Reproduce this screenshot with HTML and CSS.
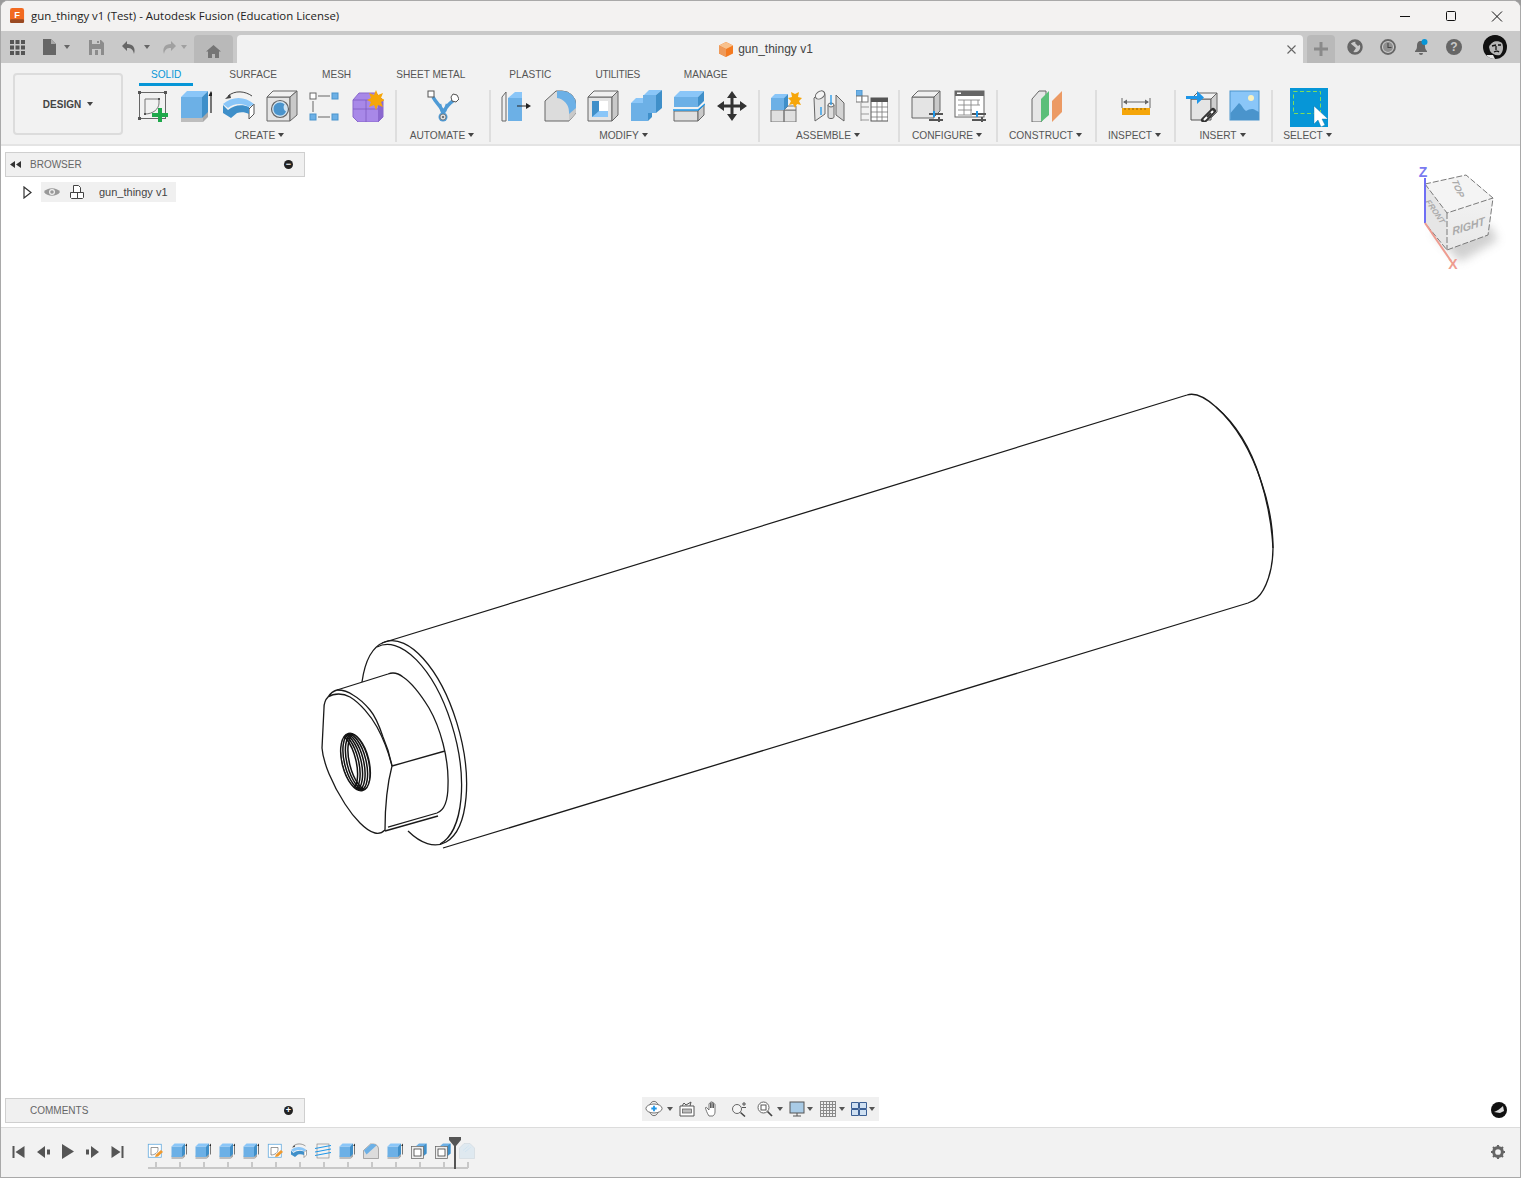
FILE: index.html
```html
<!DOCTYPE html>
<html>
<head>
  <meta charset="UTF-8">
  <title>gun_thingy v1 (Test) - Autodesk Fusion</title>
  <link rel="stylesheet" href="styles.css">
</head>
<body>
  <!-- icon sheet -->
  <svg class="sprites" xmlns="http://www.w3.org/2000/svg">
    <symbol id="i-sketch" viewBox="0 0 32 32">
      <rect x="2.5" y="2.5" width="26" height="26" fill="none" stroke="#666" stroke-width="1"/>
      <path d="M8 9H22V13C22 19 16 24 8 24Z" fill="none" stroke="#777" stroke-width="1"/>
      <g fill="#555"><rect x="1" y="1" width="3" height="3"/><rect x="27" y="1" width="3" height="3"/><rect x="1" y="27" width="3" height="3"/><rect x="7" y="23" width="2" height="2"/><rect x="21" y="8" width="2" height="2"/></g>
      <path d="M21 18h4v5h6v4h-6v5h-4v-5h-6v-4h6z" fill="#1fa84b"/>
    </symbol>
    <symbol id="i-sketch-edit" viewBox="0 0 32 32">
      <rect x="2.5" y="2.5" width="26" height="26" fill="#fff" stroke="#5aa5dc" stroke-width="1.5"/>
      <path d="M8 9H22V13C22 19 16 24 8 24Z" fill="none" stroke="#777" stroke-width="1.5"/>
      <path d="M16 28l2-5 10-9 4 4-10 9z" fill="#f09a2e"/>
    </symbol>
    <symbol id="i-extrude" viewBox="0 0 32 32">
      <path d="M1 25h22v7H1z" fill="#bdbdbd"/><path d="M23 25l5-5v7l-5 5z" fill="#a8a8a8"/>
      <path d="M1 7h21v21H1z" fill="#6cb0e6"/><path d="M1 7l6-6h21l-6 6z" fill="#8ac6f8"/><path d="M22 7l6-6v21l-6 6z" fill="#3f8fc9"/>
      <path d="M31 23V5" stroke="#222" stroke-width="1.2"/><path d="M31 1l-2.5 5h5z" fill="#222"/>
    </symbol>
    <symbol id="i-revolve" viewBox="0 0 32 32">
      <path d="M5 6C12 0 22 1 29 6" fill="none" stroke="#444" stroke-width="1"/><path d="M2 9l5-5 1 4z" fill="#444"/>
      <path d="M26 19l5-5v10l-5 5z" fill="#fff" stroke="#555"/>
      <path d="M0 15v8l8 5 6-5c4-1 8-1 12 1v-7C19 14 11 15 5 20z" fill="#3f8fc9"/>
      <path d="M0 14l5 4C11 13 20 13 26 17l5-3C22 6 9 6 0 14z" fill="#8ac6f8"/>
    </symbol>
    <symbol id="i-hole" viewBox="0 0 32 32">
      <path d="M1 7h23v24H1z" fill="#e4e4e4" stroke="#666"/><path d="M1 7l6-6h24l-7 6z" fill="#f0f0f0" stroke="#666"/><path d="M24 7l7-6v24l-7 6z" fill="#c9c9c9" stroke="#666"/>
      <circle cx="14" cy="19" r="8.5" fill="#cfe3f2" stroke="#666" stroke-width="1.2"/>
      <path d="M7.5 19a6.5 6.5 0 0 1 11-4.7a5 5 0 0 0 1.5 7.2a6.5 6.5 0 0 1-12.5-2.5z" fill="#4a94cc"/>
    </symbol>
    <symbol id="i-pattern" viewBox="0 0 32 32">
      <rect x="1" y="3" width="6" height="6" fill="#fff" stroke="#666"/><rect x="23" y="3" width="6" height="6" fill="#6cb0e6" stroke="#4a94cc"/>
      <rect x="1" y="24" width="6" height="6" fill="#6cb0e6" stroke="#4a94cc"/><rect x="23" y="24" width="6" height="6" fill="#6cb0e6" stroke="#4a94cc"/>
      <path d="M9 6H21M4 11V22M9 27H21" stroke="#666" stroke-width="1"/>
    </symbol>
    <symbol id="i-newbody" viewBox="0 0 32 32">
      <path d="M1 10L7 3H24L31 10V27L26 32H6L1 27Z" fill="#a888e8" stroke="#8a68cc"/>
      <path d="M1 19H28M14 10V32M1 10H26" stroke="#7d5cc0" stroke-width=".8"/><path d="M26 10l5 0v17l-5 5z" fill="#8b68cf"/>
      <path d="M24 0l2 5 5-2-2 5 4 2-4 2 2 5-5-2-2 5-2-5-5 2 2-5-4-2 4-2-2-5 5 2z" fill="#f6a609"/>
    </symbol>
    <symbol id="i-automate" viewBox="0 0 32 32">
      <path d="M6 7C9 13 13 15 15 20L18 20C20 15 23 13 27 10" fill="none" stroke="#4f9bd6" stroke-width="3.5"/>
      <path d="M13 14L16 26 20 14" fill="none" stroke="#4f9bd6" stroke-width="2.5"/>
      <rect x="1" y="1" width="6" height="6" fill="#fff" stroke="#555"/><path d="M26 4l4 1 2 4-3 3-4-1-1-4z" fill="#fff" stroke="#555"/>
      <circle cx="16" cy="27" r="4.5" fill="#4f9bd6"/><circle cx="16" cy="27" r="3" fill="#ddd" stroke="#666" stroke-width=".7"/><circle cx="16" cy="27" r="1" fill="#555"/>
    </symbol>
    <symbol id="i-press" viewBox="0 0 32 32">
      <path d="M1 7L5 2V31H1z" fill="#eee" stroke="#666"/><path d="M7 8h14v23H7z" fill="#6cb0e6"/><path d="M7 8l7-6h7v6z" fill="#8ac6f8"/>
      <path d="M16 16h12" stroke="#222" stroke-width="1.2"/><path d="M30 16l-5-3v6z" fill="#222"/>
    </symbol>
    <symbol id="i-fillet" viewBox="0 0 32 32">
      <path d="M1 11L12 1h6a14 14 0 0 1 14 14v8l-7 8H1z" fill="#dcdcdc" stroke="#666"/>
      <path d="M13 1h5a14 14 0 0 1 14 14v4l-7 7V22A14 14 0 0 0 13 8z" fill="#6cb0e6"/>
      <path d="M25 24v7l7-8v-5z" fill="#c9c9c9"/>
    </symbol>
    <symbol id="i-shell" viewBox="0 0 32 32">
      <path d="M1 7h24v24H1z" fill="#e4e4e4" stroke="#666"/><path d="M1 7l6-6h24l-6 6z" fill="#f0f0f0" stroke="#666"/><path d="M25 7l6-6v24l-6 6z" fill="#c9c9c9" stroke="#666"/>
      <rect x="5" y="11" width="16" height="16" fill="#fff"/><path d="M5 11h7v10h9v6H5z" fill="#3f8fc9"/><path d="M5 27l7-6h9v6z" fill="#8ac6f8"/>
    </symbol>
    <symbol id="i-combine" viewBox="0 0 32 32">
      <path d="M1 13h12V31H1z" fill="#6cb0e6"/><path d="M1 13l5-5h8l-1 5z" fill="#8ac6f8"/><path d="M14 5l5-5h13l-6 5z" fill="#8ac6f8"/><path d="M13 5h13v18h-8v8l-5 0z" fill="#6cb0e6"/><path d="M26 5l6-5v18l-6 5z" fill="#3f8fc9"/><path d="M18 23l4 0v4l-4 4z" fill="#3f8fc9"/>
    </symbol>
    <symbol id="i-split" viewBox="0 0 32 32">
      <path d="M1 21h24v10H1z" fill="#e0e0e0" stroke="#666"/><path d="M25 21l6-6v10l-6 6z" fill="#c9c9c9" stroke="#666"/>
      <path d="M1 7h24v10H1z" fill="#6cb0e6"/><path d="M1 7l6-6h24l-6 6z" fill="#8ac6f8"/><path d="M25 7l6-6v10l-6 6z" fill="#3f8fc9"/>
      <path d="M0 20H25L32 14" fill="none" stroke="#1e96e8" stroke-width="1.3"/>
    </symbol>
    <symbol id="i-move" viewBox="0 0 32 32">
      <path d="M16 1l5 7h-3.5v6.500H24V11l7 5-7 5v-3.5h-6.500V24H21l-5 7-5-7h3.5v-6.500H8V21l-7-5 7-5v3.5h6.500V8H11z" fill="#333"/>
    </symbol>
    <symbol id="i-newcomp" viewBox="0 0 32 32">
      <path d="M1 20h13v12H1zM14 20h12v12H14z" fill="#e0e0e0" stroke="#777"/><path d="M14 20l4-4h8v4z" fill="#f0f0f0" stroke="#777"/>
      <path d="M1 8h13v12H1z" fill="#6cb0e6"/><path d="M1 8l4-4h13l-4 4z" fill="#8ac6f8"/><path d="M14 8l4-4v12l-4 4z" fill="#3f8fc9"/>
      <path d="M23 0l2 4 4-2-1 5 4 1-3 3 2 4-4-1-2 4-2-4-4 1 2-4-3-3 4-1-1-5 4 2z" fill="#f6a609"/>
    </symbol>
    <symbol id="i-joint" viewBox="0 0 32 32">
      <path d="M1 8L8 1C11 1 12 3 12 5V24L2 31Z" fill="#e6e6e6" stroke="#666"/><ellipse cx="7" cy="5" rx="5" ry="3.5" transform="rotate(-35 7 5)" fill="#f4f4f4" stroke="#666"/>
      <path d="M23 5L31 13V31L23 25Z" fill="#d4d4d4" stroke="#666"/><path d="M15 15v12c0 2 6 2 6 0V15z" fill="#ddd" stroke="#666"/><ellipse cx="18" cy="15" rx="3" ry="2" fill="#eee" stroke="#666"/>
      <path d="M18 5v10M8 17v8" stroke="#1e96e8" stroke-width="1.3"/>
    </symbol>
    <symbol id="i-bom" viewBox="0 0 32 32">
      <rect x="0" y="0" width="6" height="6" fill="#6cb0e6" stroke="#4a94cc"/><rect x="0" y="6" width="6" height="6" fill="#fff" stroke="#777"/><rect x="6" y="6" width="6" height="6" fill="#fff" stroke="#777"/>
      <path d="M5 13V31M5 17H13M5 24H13M5 30H13" stroke="#999" stroke-width="1"/>
      <rect x="15" y="8" width="17" height="23" fill="#fff" stroke="#555"/><path d="M15 8h17v4H15z" fill="#555"/><path d="M15 17H32M15 22H32M15 27H32M21 12V31M26 12V31" stroke="#777" stroke-width=".8"/>
    </symbol>
    <symbol id="i-config" viewBox="0 0 32 32">
      <path d="M1 7h22v21H1z" fill="#e4e4e4" stroke="#666"/><path d="M1 7l6-6h22l-6 6z" fill="#f0f0f0" stroke="#666"/><path d="M23 7l6-6v20l-6 6z" fill="#c9c9c9" stroke="#666"/>
      <path d="M18 24H32M18 30H32" stroke="#555" stroke-width="1.8"/><path d="M23 21v6" stroke="#1e96e8" stroke-width="2"/><path d="M28 27v5" stroke="#555" stroke-width="2"/>
    </symbol>
    <symbol id="i-table" viewBox="0 0 32 32">
      <rect x="1" y="1" width="29" height="26" fill="#fff" stroke="#666"/><path d="M1 1h29v5H1z" fill="#666"/><rect x="3" y="2.5" width="4" height="1.5" fill="#fff"/>
      <path d="M4 10H26M4 15H26M4 20H18M4 25H18M10 10V25M17 10V25M24 10V15" stroke="#888" stroke-width=".9"/>
      <path d="M18 24H32M18 30H32" stroke="#555" stroke-width="1.8"/><path d="M23 21v6" stroke="#1e96e8" stroke-width="2"/><path d="M28 27v5" stroke="#555" stroke-width="2"/>
    </symbol>
    <symbol id="i-construct" viewBox="0 0 32 32">
      <path d="M1 9L8 1h7v23l-5 8H1z" fill="#e6e6e6" stroke="#666"/>
      <path d="M10 9L18 1v24l-8 7z" fill="#5bbf79"/><path d="M21 11L31 1v21l-10 10z" fill="#ec9a64"/>
    </symbol>
    <symbol id="i-measure" viewBox="0 0 32 32">
      <path d="M2 8v10M30 8v10M4 12H28" stroke="#666" stroke-width="1"/><path d="M3 12l4-2.5v5zM29 12l-4-2.5v5z" fill="#666"/>
      <rect x="2" y="18" width="28" height="7" fill="#f5a60a"/><path d="M5 18v2M9 18v2M13 18v2M17 18v2M21 18v2M25 18v2" stroke="#7a5000" stroke-width=".8"/>
    </symbol>
    <symbol id="i-insert" viewBox="0 0 32 32">
      <path d="M5 9h20v21H5z" fill="#e4e4e4" stroke="#555"/><path d="M5 9l6-6h20l-6 6z" fill="#f2f2f2" stroke="#666"/><path d="M25 9l6-6v19l-6 6z" fill="#cfcfcf" stroke="#666"/>
      <path d="M0 6h11V1l7 6.5-7 6.5V9H0z" fill="#1e96e8"/>
      <path d="M18 30l9-9" stroke="#333" stroke-width="6" stroke-linecap="round"/><path d="M18.5 29.5l8-8" stroke="#fff" stroke-width="2" stroke-linecap="round"/><path d="M21 27l4-4" stroke="#333" stroke-width="2"/>
    </symbol>
    <symbol id="i-image" viewBox="0 0 32 32">
      <rect x="1" y="1" width="29" height="29" fill="#8ac6f8" stroke="#4a94cc"/><circle cx="22" cy="8" r="3" fill="#f9f1c0"/>
      <path d="M1.5 23L10 13c3 2 4 6 7 8 3-2 7-3 9-1l4 2v8H1.5z" fill="#4a94cc"/>
    </symbol>
    <symbol id="i-select" viewBox="0 0 38 39">
      <rect width="38" height="39" fill="#0696d7"/>
      <rect x="3.5" y="3.5" width="27" height="22" fill="none" stroke="#7fdc5a" stroke-width="1" stroke-dasharray="4 2.5"/>
      <path d="M24 18v18l4-4 3 7 4-2-3-6h6z" fill="#fff" stroke="#0a6fa0" stroke-width=".4"/>
    </symbol>
    <symbol id="i-fillet-small" viewBox="0 0 32 32">
      <path d="M1 15L15 2h6A10 10 0 0 1 31 12V31H1z" fill="#dcdcdc" stroke="#666"/>
      <path d="M2 15L16 2h4c2 0 5 1 7 3L7 23z" fill="#6cb0e6"/>
    </symbol>
    <symbol id="i-coil" viewBox="0 0 32 32">
      <rect x="4" y="2" width="24" height="28" fill="none" stroke="#666" stroke-width="1"/>
      <path d="M0 11L32 5M0 18L32 12M0 25L32 19" stroke="#1e96e8" stroke-width="2.2"/>
    </symbol>
    <symbol id="i-shell-small" viewBox="0 0 32 32">
      <path d="M10 6l6-5h15v20l-6 5H18V6z" fill="#6cb0e6"/><path d="M25 6l6-5v20l-6 5z" fill="#3f8fc9"/>
      <rect x="1" y="7" width="24" height="24" fill="#eee" stroke="#666" stroke-width="1.5"/><rect x="6" y="12" width="14" height="14" fill="#fff" stroke="#333" stroke-width="1.5"/>
    </symbol>
    <symbol id="i-faded" viewBox="0 0 32 32">
      <path d="M1 10L10 1h12l9 9v21H1z" fill="#dfe9f0" stroke="#c9d2d8"/><path d="M8 15L20 5M12 18L24 8" stroke="#a9d2ef" stroke-width="1" stroke-dasharray="1.5 1.5"/>
    </symbol>
  </svg>

  <div class="window">
    <div class="titlebar">
      <svg class="app-icon" viewBox="0 0 16 17">
        <rect width="15" height="16" rx="2.5" fill="#f26a21"/><rect y="12" width="15" height="4" rx="1.5" fill="#9a4a22"/>
        <text x="7.5" y="10.5" text-anchor="middle" class="app-icon-letter">F</text>
      </svg>
      <span class="app-title">gun_thingy v1 (Test) - Autodesk Fusion (Education License)</span>
      <div class="win-buttons">
        <svg viewBox="0 0 46 30"><path d="M18 15.5H28" stroke="#111"/></svg>
        <svg viewBox="0 0 46 30"><rect x="18.5" y="10.5" width="9" height="9" rx="1" fill="none" stroke="#111"/></svg>
        <svg viewBox="0 0 46 30"><path d="M18 10.5L28 20.5M28 10.5L18 20.5" stroke="#111"/></svg>
      </div>
    </div>

    <div class="tabbar">
      <div class="qat">
        <svg class="qat-grid" viewBox="0 0 15 15"><path d="M0 0h4v4H0zM5.5 0h4v4h-4zM11 0h4v4h-4zM0 5.5h4v4H0zM5.5 5.5h4v4h-4zM11 5.5h4v4h-4zM0 11h4v4H0zM5.5 11h4v4h-4zM11 11h4v4h-4z" fill="#555"/></svg>
        <svg class="qat-file" viewBox="0 0 13 16"><path d="M0 0h8l5 5v11H0z" fill="#666"/><path d="M8 0l5 5H8z" fill="#a9a9a9"/></svg>
        <span class="caret qat-caret"></span>
        <svg class="qat-save" viewBox="0 0 15 15"><path d="M0 0h12l3 3v12H0z" fill="#8c8c8c"/><path d="M3 0h8v4H3zM3 9h9v6H3z" fill="#c9c9c9"/><path d="M8 1h2v2H8zM6 10h3v5H6z" fill="#8c8c8c"/></svg>
        <svg class="qat-undo" viewBox="0 0 14 13"><path d="M5 0L0 5l5 5V7c4 0 6 1 7 6 2-6-1-10-7-10z" fill="#666"/></svg>
        <span class="caret qat-caret"></span>
        <svg class="qat-redo" viewBox="0 0 14 13"><path d="M9 0l5 5-5 5V7C5 7 3 8 2 13 0 7 3 3 9 3z" fill="#a0a0a0"/></svg>
        <span class="caret qat-caret qat-caret-off"></span>
      </div>
      <div class="home-tab">
        <svg viewBox="0 0 15 13"><path d="M7.5 0L15 6.5h-2V13H9V9H6v4H2V6.5H0z" fill="#757575"/></svg>
      </div>
      <div class="doc-tab">
        <svg class="doc-icon" viewBox="0 0 14 15"><path d="M7 0l7 3.5v8L7 15 0 11.5v-8z" fill="#f47a20"/><path d="M7 0l7 3.5L7 7 0 3.5z" fill="#f8c18d"/><path d="M0 3.5L7 7v8L0 11.5z" fill="#ee9a5a"/></svg>
        <span class="doc-title">gun_thingy v1</span>
        <svg class="doc-close" viewBox="0 0 9 9"><path d="M.5.5l8 8M8.5.5l-8 8" stroke="#666" stroke-width="1.1"/></svg>
      </div>
      <div class="plus-tab">
        <svg viewBox="0 0 14 14"><path d="M5.5 0h3v5.5H14v3H8.5V14h-3V8.5H0v-3h5.5z" fill="#8a8a8a"/></svg>
      </div>
      <div class="status-icons">
        <svg viewBox="0 0 16 16"><circle cx="8" cy="8" r="6.5" fill="none" stroke="#666" stroke-width="2.5"/><path d="M3 4l6 5-4 6-3-4zM10 1l4 4-3 2-3-3z" fill="#666"/></svg>
        <svg viewBox="0 0 16 16"><circle cx="8" cy="8" r="7" fill="none" stroke="#666" stroke-width="1.8"/><circle cx="8" cy="8" r="5" fill="#8f8f8f"/><path d="M8 4v4.5h3.5" fill="none" stroke="#444" stroke-width="1.1"/></svg>
        <svg viewBox="0 0 16 16"><path d="M8 2C5 2 4 4 4 7c0 3-1 4-2 5v1h12v-1c-1-1-2-2-2-5 0-3-1-5-4-5zM6 14a2 2 0 0 0 4 0z" fill="#666"/><circle cx="11.5" cy="3" r="3" fill="#0696d7"/></svg>
        <svg viewBox="0 0 16 16"><circle cx="8" cy="8" r="8" fill="#666"/><text x="8" y="12.3" text-anchor="middle" class="help-mark">?</text></svg>
      </div>
      <svg class="avatar" viewBox="0 0 24 24">
        <defs><clipPath id="avatar-clip"><circle cx="12" cy="12" r="12"/></clipPath></defs>
        <g clip-path="url(#avatar-clip)">
          <rect width="24" height="24" fill="#111"/>
          <path d="M6 12C8 6 15 5 19 8c2 4 1 9-2 12-4 1-8-1-10-4z" fill="#b5b5b5"/>
          <path d="M9 11l4-1M15 10l3 0M13 11v4M11 17c2-1 4-1 5 0" stroke="#111" stroke-width="1.3" fill="none"/>
          <path d="M4 20l6 0 2 4H2z" fill="#e5e5e5"/><path d="M5 3C10-1 19 0 22 6 16 3 10 5 7 10z" fill="#111"/>
        </g>
      </svg>
    </div>

    <div class="toolbar">
      <div class="workspace">
        <span>DESIGN</span><span class="caret"></span>
      </div>
      <div class="ribbon">
        <div class="tabs">
          <span class="tab tab-active">SOLID</span>
          <span class="tab">SURFACE</span>
          <span class="tab">MESH</span>
          <span class="tab">SHEET METAL</span>
          <span class="tab">PLASTIC</span>
          <span class="tab">UTILITIES</span>
          <span class="tab">MANAGE</span>
        </div>
        <div class="groups">
          <div class="group g-create">
            <div class="tools">
              <svg class="tool"><use href="#i-sketch"/></svg>
              <svg class="tool"><use href="#i-extrude"/></svg>
              <svg class="tool"><use href="#i-revolve"/></svg>
              <svg class="tool"><use href="#i-hole"/></svg>
              <svg class="tool"><use href="#i-pattern"/></svg>
              <svg class="tool"><use href="#i-newbody"/></svg>
            </div>
            <div class="group-label">CREATE<span class="caret"></span></div>
          </div>
          <div class="group g-automate">
            <div class="tools"><svg class="tool"><use href="#i-automate"/></svg></div>
            <div class="group-label">AUTOMATE<span class="caret"></span></div>
          </div>
          <div class="group g-modify">
            <div class="tools">
              <svg class="tool"><use href="#i-press"/></svg>
              <svg class="tool"><use href="#i-fillet"/></svg>
              <svg class="tool"><use href="#i-shell"/></svg>
              <svg class="tool"><use href="#i-combine"/></svg>
              <svg class="tool"><use href="#i-split"/></svg>
              <svg class="tool"><use href="#i-move"/></svg>
            </div>
            <div class="group-label">MODIFY<span class="caret"></span></div>
          </div>
          <div class="group g-assemble">
            <div class="tools">
              <svg class="tool"><use href="#i-newcomp"/></svg>
              <svg class="tool"><use href="#i-joint"/></svg>
              <svg class="tool"><use href="#i-bom"/></svg>
            </div>
            <div class="group-label">ASSEMBLE<span class="caret"></span></div>
          </div>
          <div class="group g-configure">
            <div class="tools">
              <svg class="tool"><use href="#i-config"/></svg>
              <svg class="tool"><use href="#i-table"/></svg>
            </div>
            <div class="group-label">CONFIGURE<span class="caret"></span></div>
          </div>
          <div class="group g-construct">
            <div class="tools"><svg class="tool"><use href="#i-construct"/></svg></div>
            <div class="group-label">CONSTRUCT<span class="caret"></span></div>
          </div>
          <div class="group g-inspect">
            <div class="tools"><svg class="tool"><use href="#i-measure"/></svg></div>
            <div class="group-label">INSPECT<span class="caret"></span></div>
          </div>
          <div class="group g-insert">
            <div class="tools">
              <svg class="tool"><use href="#i-insert"/></svg>
              <svg class="tool"><use href="#i-image"/></svg>
            </div>
            <div class="group-label">INSERT<span class="caret"></span></div>
          </div>
          <div class="group g-select">
            <div class="tools"><svg class="tool-select"><use href="#i-select"/></svg></div>
            <div class="group-label">SELECT<span class="caret"></span></div>
          </div>
        </div>
      </div>
    </div>

    <div class="viewport">
      <svg class="model" viewBox="0 146 1521 981">
        <defs>
          <clipPath id="bore"><ellipse cx="355.5" cy="762" rx="13.5" ry="29.5" transform="rotate(-14 355.5 762)"/></clipPath>
          <filter id="cube-shadow" x="-50%" y="-50%" width="200%" height="200%"><feGaussianBlur stdDeviation="5"/></filter>
          <linearGradient id="cube-face" x1="0" y1="0" x2="0" y2="1"><stop offset="0" stop-color="#f2f2f2"/><stop offset="1" stop-color="#e8e8e8"/></linearGradient>
        </defs>
        <g class="edges">
          <!-- body -->
          <path d="M382 643L1187 395C1196 392 1206 398 1216 407C1236 425 1252 453 1262 484C1269 505 1273 528 1273 548C1273 570 1266 590 1257 598C1254 601 1251 602 1248 603L443 848"/>
          <path d="M1216 407C1236 424 1251 449 1260 478C1267 500 1272 528 1273 548"/>
          <!-- flange -->
          <path d="M362 682A47 105 -15 1 1 408 831"/>
          <path d="M377 647A47 103 -15 0 1 440 844"/>
          <!-- nut -->
          <path d="M337 690L388 674C393 672 398 673 403 677C412 683 421 695 429 708C440 727 449 758 448 785C448 798 445 810 437 813L388 827"/>
          <path d="M438 816L385 831"/>
          <path d="M392 766L445 751"/>
          <path d="M337 690C333 691 330 694 328 697C325 700 324 703 324 708L322 748C323 762 332 784 345 804C354 818 366 831 375 833C379 834 383 832 385 830C385 808 387 785 392 766C388 750 383 738 377 727C371 716 360 703 350 697C343 693 334 693 328 697"/>
          <path d="M337 690C344 690 349 692 353 695C360 699 365 704 370 710C376 717 380 728 383 737C387 746 390 756 392 766"/>
          <!-- bore -->
          <ellipse cx="355.5" cy="762" rx="13.5" ry="29.5" transform="rotate(-14 355.5 762)"/>
          <g clip-path="url(#bore)" class="thread">
            <ellipse cx="344" cy="762" rx="12" ry="29" transform="rotate(-14 344 762)"/>
            <ellipse cx="346.5" cy="762" rx="12" ry="29" transform="rotate(-14 346.5 762)"/>
            <ellipse cx="349" cy="762" rx="12" ry="29" transform="rotate(-14 349 762)"/>
            <ellipse cx="351.5" cy="762" rx="12" ry="29" transform="rotate(-14 351.5 762)"/>
            <ellipse cx="354" cy="762" rx="12" ry="29" transform="rotate(-14 354 762)"/>
            <ellipse cx="356.5" cy="762" rx="12" ry="29" transform="rotate(-14 356.5 762)"/>
            <ellipse cx="359" cy="762" rx="12" ry="29" transform="rotate(-14 359 762)"/>
            <ellipse cx="361.5" cy="762" rx="12" ry="29" transform="rotate(-14 361.5 762)"/>
          </g>
        </g>
        <g class="viewcube">
          <path d="M1432 232L1460 262 1498 240 1490 225z" fill="#999" opacity=".45" filter="url(#cube-shadow)"/>
          <path d="M1425 184L1466 175 1493 198 1447 213z" fill="#f4f4f4"/>
          <path d="M1447 213L1493 198 1488 235 1447 250z" fill="url(#cube-face)"/>
          <path d="M1425 184L1447 213 1447 250 1425 223z" fill="#e6e6e6"/>
          <path class="cube-edge" d="M1425 184L1466 175 1493 198 1488 235 1447 250 1425 223zM1425 184L1447 213 1493 198M1447 213V250"/>
          <text class="cube-text" transform="translate(1455 189) rotate(68) skewX(-12)" text-anchor="middle">TOP</text>
          <text class="cube-text cube-right" transform="translate(1469 230) rotate(-18) skewX(-12)" text-anchor="middle">RIGHT</text>
          <text class="cube-text cube-front" transform="translate(1433 213) rotate(55) skewX(-5)" text-anchor="middle">FRONT</text>
          <path d="M1425 178V223" stroke="#6f6ff5" stroke-width="2"/>
          <path d="M1425 223L1451 261" stroke="#ee9c90" stroke-width="2"/>
          <text class="axis axis-z" x="1423" y="177" text-anchor="middle">Z</text>
          <text class="axis axis-x" x="1453" y="269" text-anchor="middle">X</text>
        </g>
      </svg>

      <div class="panel browser">
        <svg class="panel-back" viewBox="0 0 11 7"><path d="M5 0v7L0 3.5zM11 0v7L6 3.5z" fill="#333"/></svg>
        <span class="panel-title">BROWSER</span>
        <span class="round-btn">&#8722;</span>
      </div>
      <div class="tree-row">
        <svg class="tree-arrow" viewBox="0 0 9 13"><path d="M1 1l7 5.5L1 12z" fill="#fff" stroke="#333" stroke-width="1.2"/></svg>
        <div class="tree-item">
          <svg class="tree-eye" viewBox="0 0 16 10"><path d="M0 5C3 0 13 0 16 5 13 10 3 10 0 5z" fill="#999"/><circle cx="8" cy="5" r="3" fill="#f0f0f0"/><circle cx="8" cy="5" r="1.8" fill="#999"/></svg>
          <svg class="tree-comp" viewBox="0 0 16 16"><path d="M4.5 1.5h5l2 2v5h-7zM1.5 8.5h7v6h-6l-1-1zM8.5 8.5h6v5l-1 1h-5z" fill="#fff" stroke="#444" stroke-linejoin="round"/></svg>
          <span class="tree-label">gun_thingy v1</span>
        </div>
      </div>

      <div class="bottom-row">
        <div class="panel comments">
          <span class="panel-title">COMMENTS</span>
          <span class="round-btn">+</span>
        </div>
        <div class="navbar">
          <svg class="nav-orbit" viewBox="0 0 20 18"><ellipse cx="10" cy="9" rx="5.5" ry="8" fill="none" stroke="#666"/><ellipse cx="10" cy="9" rx="9" ry="5" fill="#fff" stroke="#666"/><path d="M9 6h2v2h2v2h-2v2H9v-2H7V8h2z" fill="#1e96e8"/></svg>
          <span class="caret"></span>
          <svg class="nav-icon nav-camera" viewBox="0 0 16 16"><path d="M1 5h14v10H1z" fill="#fff" stroke="#555"/><rect x="3.5" y="8" width="9" height="4" fill="#bbb" stroke="#555" stroke-width=".7"/><path d="M3 5l2-3 2 2 5-3-1 4" fill="none" stroke="#555"/></svg>
          <svg class="nav-icon nav-hand" viewBox="0 0 16 16"><path d="M4 15C2 12 1 9 .5 7c0-1 1-1 1.5 0L4 9V3c0-1 1.5-1 1.5 0v4V1.500c0-1 1.500-1 1.500 0V7V2c0-1 1.500-1 1.500 0v5V3.500c0-1 1.500-1 1.500 0V11c0 2-1 3-2 4z" fill="#fff" stroke="#555" stroke-width=".8"/></svg>
          <svg class="nav-icon nav-zoom" viewBox="0 0 16 16"><circle cx="6" cy="8" r="4.5" fill="#f5f5f5" stroke="#666"/><path d="M9.5 11.5L14 15.5" stroke="#444" stroke-width="1.5"/><path d="M11 3h4M13 1v4M11 6.5h4" stroke="#555"/></svg>
          <svg class="nav-icon nav-fit" viewBox="0 0 16 16"><circle cx="6.5" cy="6.5" r="5.5" fill="#fff" stroke="#666"/><rect x="4" y="4" width="5" height="5" fill="none" stroke="#555"/><path d="M10.5 10.5L15 15" stroke="#444" stroke-width="1.7"/></svg>
          <span class="caret"></span>
          <svg class="nav-icon nav-display" viewBox="0 0 16 16"><rect x="1" y="1" width="14" height="11" fill="#a9cbe6" stroke="#555"/><path d="M4 15h8M8 12v3" stroke="#555"/></svg>
          <span class="caret"></span>
          <svg class="nav-icon nav-grid" viewBox="0 0 16 16"><path d="M0 .5h15M0 3.5h15M0 6.5h15M0 9.5h15M0 12.5h15M0 15.5h15M.5 0v16M3.5 0v16M6.5 0v16M9.5 0v16M12.5 0v16M15.5 0v16" stroke="#8a8a8a"/></svg>
          <span class="caret"></span>
          <svg class="nav-icon nav-views" viewBox="0 0 16 16"><path d="M.5 1.5h7v6h-7zM8.5 1.5h7v6h-7zM.5 8.5h7v6h-7zM8.5 8.5h7v6h-7z" fill="#cfe0f2" stroke="#3b5f94"/></svg>
          <span class="caret"></span>
        </div>
        <svg class="corner-badge" viewBox="0 0 16 16"><circle cx="8" cy="8" r="8" fill="#111"/><path d="M3 10C6 9 9 7 12 4L13 9 9 11z" fill="#ddd"/></svg>
      </div>
    </div>

    <div class="timeline">
      <div class="playback">
        <svg viewBox="0 0 12 12"><path d="M0 0h2v12H0zM12 0v12L3 6z" fill="#555"/></svg>
        <svg viewBox="0 0 13 12"><path d="M8 0v12L0 6zM10 3.5h3v5h-3z" fill="#555"/></svg>
        <svg class="play" viewBox="0 0 12 15"><path d="M0 0l12 7.5L0 15z" fill="#555"/></svg>
        <svg viewBox="0 0 13 12"><path d="M5 0v12l8-6zM0 3.5h3v5H0z" fill="#555"/></svg>
        <svg viewBox="0 0 12 12"><path d="M12 0h-2v12h2zM0 0v12l9-6z" fill="#555"/></svg>
      </div>
      <div class="steps">
        <div class="step"><svg><use href="#i-sketch-edit"/></svg></div>
        <div class="step"><svg><use href="#i-extrude"/></svg></div>
        <div class="step"><svg><use href="#i-extrude"/></svg></div>
        <div class="step"><svg><use href="#i-extrude"/></svg></div>
        <div class="step"><svg><use href="#i-extrude"/></svg></div>
        <div class="step"><svg><use href="#i-sketch-edit"/></svg></div>
        <div class="step"><svg><use href="#i-revolve"/></svg></div>
        <div class="step"><svg><use href="#i-coil"/></svg></div>
        <div class="step"><svg><use href="#i-extrude"/></svg></div>
        <div class="step"><svg><use href="#i-fillet-small"/></svg></div>
        <div class="step"><svg><use href="#i-extrude"/></svg></div>
        <div class="step"><svg><use href="#i-shell-small"/></svg></div>
        <div class="step"><svg><use href="#i-shell-small"/></svg></div>
        <div class="step"><svg><use href="#i-faded"/></svg></div>
        <svg class="marker" viewBox="0 0 12 32"><path d="M0 0h12v3L7 9v23H5V9L0 3z" fill="#555"/></svg>
      </div>
      <svg class="settings" viewBox="0 0 16 16"><circle cx="8" cy="8" r="5" fill="none" stroke="#666" stroke-width="3.5"/><path d="M8 0v3M8 13v3M0 8h3M13 8h3M2.3 2.3l2.2 2.2M11.5 11.5l2.2 2.2M13.7 2.3l-2.2 2.2M4.5 11.5l-2.2 2.2" stroke="#666" stroke-width="2.4"/></svg>
    </div>
  </div>
</body>
</html>
```

FILE: styles.css
```css
html, body {
  margin: 0;
  height: 100%;
  background: #9a9a9a;
}
body {
  font-family: 'Liberation Sans', Arial, sans-serif;
  color: #555;
  overflow: hidden;
}
.sprites {
  display: none;
}
svg {
  display: block;
  flex: none;
}
.window {
  height: 1178px;
  box-sizing: border-box;
  display: flex;
  flex-direction: column;
  background: #fff;
  border: 1px solid #a9a9a9;
  border-radius: 8px 8px 0 0;
  overflow: hidden;
}
.caret {
  display: inline-block;
  width: 0;
  height: 0;
  margin-left: 4px;
  border-left: 3px solid transparent;
  border-right: 3px solid transparent;
  border-top: 4px solid #444;
  vertical-align: 2px;
}

/* title bar */
.titlebar {
  height: 30px;
  display: flex;
  align-items: center;
  background: #f3f2f1;
  padding-left: 9px;
}
.app-icon {
  width: 15px;
  height: 16px;
}
.app-icon-letter {
  font: bold 10px 'Liberation Sans', sans-serif;
  fill: #fff;
}
.app-title {
  margin: 0 0 2px 6px;
  font-family: 'Open Sans', sans-serif;
  font-size: 11.43px;
  color: #222;
}
.win-buttons {
  margin-left: auto;
  display: flex;
}
.win-buttons svg {
  width: 46px;
  height: 30px;
}

/* tab strip */
.tabbar {
  height: 32px;
  display: flex;
  align-items: flex-end;
  background: #c9c9c9;
}
.qat {
  width: 193px;
  height: 32px;
  display: flex;
  align-items: center;
  flex: none;
  padding-left: 9px;
  box-sizing: border-box;
}
.qat-caret {
  margin-left: 8px;
  border-top-color: #666;
}
.qat-grid {
  width: 15px;
  height: 15px;
}
.qat-file {
  width: 13px;
  height: 16px;
  margin-left: 18px;
}
.qat-save {
  width: 15px;
  height: 15px;
  margin-left: 19px;
}
.qat-undo,
.qat-redo {
  width: 14px;
  height: 13px;
  margin-left: 18px;
}
.qat-redo {
  margin-left: 12px;
}
.qat-caret-off {
  margin-left: 5px;
  border-top-color: #a0a0a0;
}
.home-tab {
  width: 39px;
  height: 28px;
  flex: none;
  display: flex;
  align-items: center;
  justify-content: center;
  background: #b9b9b9;
  border-radius: 4px 4px 0 0;
}
.home-tab svg {
  width: 15px;
  height: 13px;
  margin-top: 4px;
}
.doc-tab {
  width: 1066px;
  height: 28px;
  flex: none;
  margin-left: 4px;
  padding-right: 8px;
  box-sizing: border-box;
  display: flex;
  align-items: center;
  justify-content: center;
  position: relative;
  background: #f2f2f2;
  border-radius: 4px 4px 0 0;
}
.doc-icon {
  width: 14px;
  height: 15px;
}
.doc-title {
  margin-left: 5px;
  font-size: 12px;
  color: #444;
}
.doc-close {
  position: absolute;
  right: 7px;
  top: 10px;
  width: 9px;
  height: 9px;
}
.plus-tab {
  width: 28px;
  height: 28px;
  flex: none;
  margin-left: 4px;
  display: flex;
  align-items: center;
  justify-content: center;
  background: #b9b9b9;
  border-radius: 4px 4px 0 0;
}
.plus-tab svg {
  width: 14px;
  height: 14px;
}
.status-icons {
  height: 32px;
  display: flex;
  align-items: center;
  gap: 17px;
  margin-left: 12px;
}
.status-icons svg {
  width: 16px;
  height: 16px;
  margin-bottom: 1px;
}
.help-mark {
  font: bold 12px 'Liberation Sans', sans-serif;
  fill: #c9c9c9;
}
.avatar {
  width: 24px;
  height: 24px;
  margin: 0 0 4px 21px;
}

/* ribbon */
.toolbar {
  height: 83px;
  flex: none;
  display: flex;
  background: #f2f2f2;
  border-bottom: 2px solid #e4e4e4;
  box-sizing: border-box;
}
.workspace {
  width: 110px;
  height: 62px;
  margin: 10px 6px 0 12px;
  box-sizing: border-box;
  flex: none;
  display: flex;
  align-items: center;
  justify-content: center;
  border: 2px solid #dcdcdc;
  border-radius: 4px;
  font-size: 10px;
  font-weight: bold;
  color: #444;
}
.workspace .caret {
  margin-left: 6px;
}
.ribbon {
  flex: 1;
  display: flex;
  flex-direction: column;
}
.tabs {
  height: 24px;
  display: flex;
  margin-left: 10px;
  gap: 20px;
}
.tab {
  height: 23px;
  box-sizing: border-box;
  padding: 6px 12px 0;
  font-size: 10.1px;
  line-height: 12px;
  color: #555;
  white-space: nowrap;
}
.tab:nth-child(1) {
  margin-right: 4px;
}
.tab:nth-child(2),
.tab:nth-child(3) {
  margin-right: 1px;
}
.tab:nth-child(6) {
  letter-spacing: -.3px;
}
.tab-active {
  color: #0696d7;
  border-bottom: 3px solid #0696d7;
}
.groups {
  display: flex;
  margin-top: 3px;
}
.group {
  height: 52px;
  box-sizing: border-box;
  border-right: 2px solid #dedede;
  display: flex;
  flex-direction: column;
  align-items: center;
}
.g-create { width: 268px; padding-right: 3px; }
.g-automate { width: 94px; }
.g-modify { width: 269px; }
.g-assemble { width: 140px; }
.g-configure { width: 98px; }
.g-construct { width: 99px; }
.g-inspect { width: 79px; }
.g-insert { width: 97px; }
.g-select { width: 75px; padding-right: 4px; border-right: 0; }
.tools {
  height: 40px;
  display: flex;
  align-items: flex-start;
  gap: 11px;
}
.tool {
  width: 32px;
  height: 32px;
}
.tool-select {
  width: 38px;
  height: 39px;
  margin-top: -2px;
}
.group-label {
  margin-right: 2px;
  font-size: 10.2px;
  line-height: 12px;
  color: #555;
  white-space: nowrap;
}
.group-label .caret {
  margin-left: 3px;
}

/* canvas */
.viewport {
  flex: 1;
  position: relative;
  display: flex;
  flex-direction: column;
  padding: 6px 0 4px 4px;
  box-sizing: border-box;
  background: #fff;
}
.model {
  position: absolute;
  left: -1px;
  top: 0;
  width: 1521px;
  height: 981px;
}
.edges path,
.edges ellipse {
  fill: none;
  stroke: #1a1a1a;
  stroke-width: 1.3;
}
.edges .thread ellipse {
  stroke: #111;
  stroke-width: 1.5;
}
.cube-edge {
  fill: none;
  stroke: #7a7a7a;
  stroke-width: 1;
  stroke-dasharray: 6 2;
}
.cube-text {
  font: italic bold 9px 'Liberation Sans', sans-serif;
  fill: #aaa;
}
.cube-right {
  font-size: 11px;
}
.cube-front {
  font-size: 8px;
}
.axis {
  font: bold 14px 'Liberation Sans', sans-serif;
}
.axis-z {
  fill: #7a7af0;
}
.axis-x {
  fill: #ee9c90;
}
.panel {
  position: relative;
  width: 300px;
  height: 25px;
  box-sizing: border-box;
  flex: none;
  display: flex;
  align-items: center;
  background: #f0f0f0;
  border: 1px solid #cfcfcf;
}
.panel-back {
  width: 11px;
  height: 7px;
  margin-left: 4px;
}
.panel-title {
  font-size: 10px;
  color: #666;
}
.browser .panel-title {
  margin-left: 9px;
}
.comments .panel-title {
  margin-left: 24px;
}
.round-btn {
  margin-left: auto;
  margin-right: 11px;
  width: 9px;
  height: 9px;
  border-radius: 50%;
  background: #222;
  color: #fff;
  font-size: 9px;
  font-weight: bold;
  line-height: 9px;
  text-align: center;
}
.tree-row {
  position: relative;
  height: 20px;
  margin-top: 5px;
  display: flex;
  align-items: center;
}
.tree-arrow {
  width: 9px;
  height: 13px;
  margin-left: 18px;
}
.tree-item {
  margin-left: 9px;
  width: 135px;
  height: 20px;
  display: flex;
  align-items: center;
  background: #f0f0f0;
}
.tree-eye {
  width: 16px;
  height: 10px;
  margin-left: 3px;
}
.tree-comp {
  width: 16px;
  height: 16px;
  margin-left: 9px;
}
.tree-label {
  margin-left: 14px;
  font-size: 11px;
  color: #444;
}
.bottom-row {
  position: relative;
  margin-top: auto;
  display: flex;
  align-items: center;
}
.navbar {
  margin-left: 337px;
  margin-top: -4px;
  width: 237px;
  height: 24px;
  box-sizing: border-box;
  padding-left: 3px;
  display: flex;
  align-items: center;
  background: #f0f0f0;
}
.navbar .caret {
  margin: 0 0 0 2px;
  border-top-color: #555;
  vertical-align: 0;
}
.nav-orbit {
  width: 18px;
  height: 17px;
}
.nav-icon {
  width: 16px;
  height: 16px;
}
.nav-camera { margin-left: 6px; }
.nav-hand { margin-left: 10px; }
.nav-zoom { margin-left: 9px; width: 18px; }
.nav-fit { margin-left: 9px; }
.nav-display { margin-left: 6px; }
.nav-grid { margin-left: 7px; }
.nav-views { margin-left: 6px; }
.navbar .nav-orbit + .caret,
.navbar .nav-fit + .caret {
  margin-left: 4px;
}
.navbar .nav-grid + .caret {
  margin-left: 3px;
}
.corner-badge {
  width: 16px;
  height: 16px;
  margin-left: auto;
  margin-right: 13px;
  margin-top: -2px;
}

/* timeline */
.timeline {
  height: 50px;
  display: flex;
  background: #f2f2f2;
  border-top: 1px solid #dcdcdc;
  box-sizing: border-box;
  flex: none;
}
.playback {
  width: 143px;
  flex: none;
  display: flex;
  align-items: center;
  box-sizing: border-box;
  padding: 0 0 2px 11px;
  gap: 12px;
}
.playback svg {
  width: 13px;
  height: 12px;
}
.playback .play {
  width: 12px;
  height: 15px;
}
.steps {
  position: relative;
  display: flex;
  align-items: flex-start;
}
.steps::after {
  content: '';
  position: absolute;
  left: 4px;
  top: 39px;
  width: 320px;
  height: 2px;
  background: #c8c8c8;
}
.step {
  position: relative;
  width: 24px;
  height: 40px;
  display: flex;
  justify-content: center;
  padding: 15px 2px 0 0;
  box-sizing: border-box;
}
.step svg {
  width: 16px;
  height: 16px;
}
.step::after {
  content: '';
  position: absolute;
  left: 11px;
  top: 34px;
  width: 2px;
  height: 6px;
  background: #c8c8c8;
}
.marker {
  position: absolute;
  left: 305px;
  top: 9px;
  width: 12px;
  height: 32px;
  z-index: 1;
}
.settings {
  width: 14px;
  height: 14px;
  margin: 17px 15px 0 auto;
}
```
